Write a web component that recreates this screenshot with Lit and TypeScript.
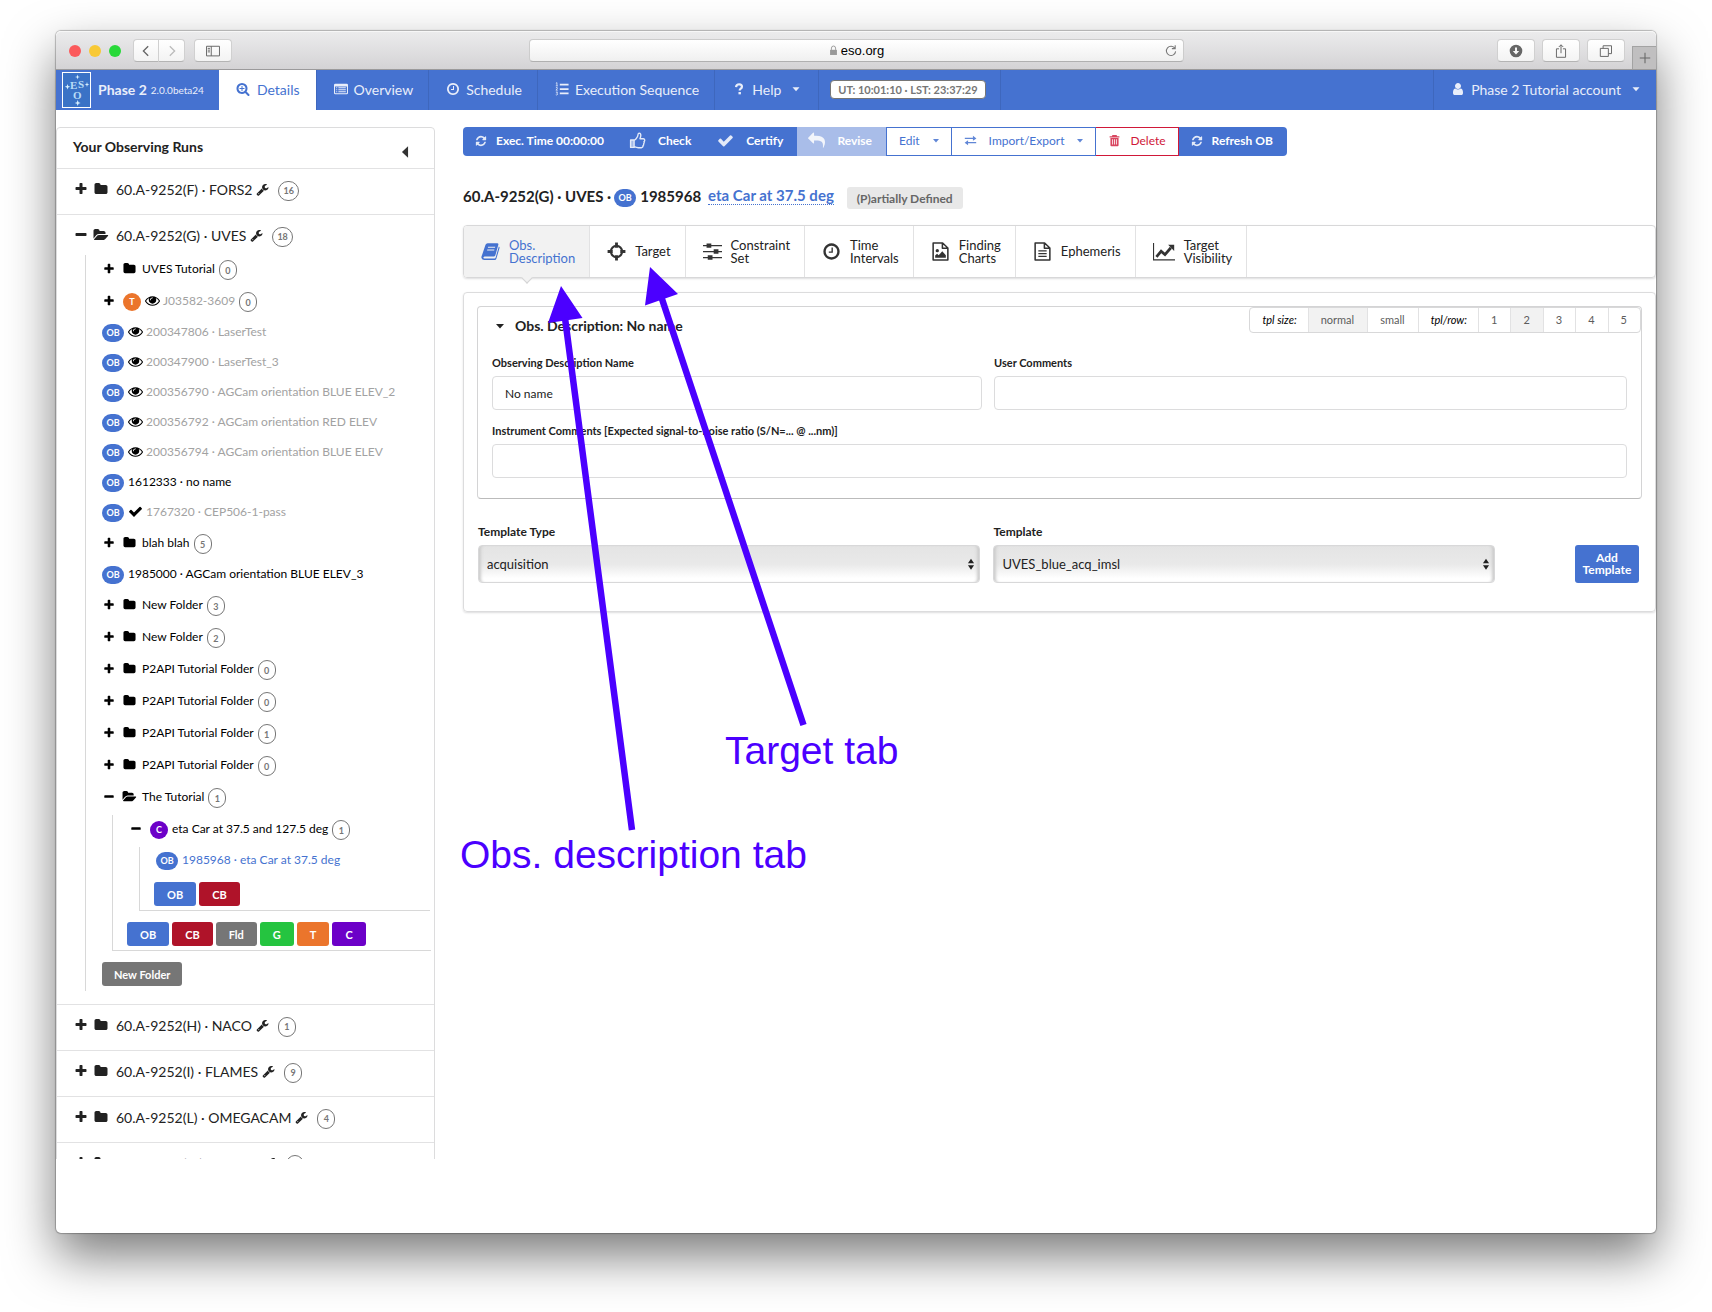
import { LitElement, html, svg, css, nothing, type TemplateResult } from "lit";
import { customElement, property } from "lit/decorators.js";
import { classMap } from "lit/directives/class-map.js";

interface Glyph {
  box: string;
  art: TemplateResult;
}

const solid = (d: string): Glyph => ({ box: "0 0 1792 1792", art: svg`<path d=${d} />` });
const drawn = (art: TemplateResult, box = "0 0 16 16"): Glyph => ({ box, art });

const GLYPHS: Record<string, Glyph> = {
  plus: solid("M1600 736v192q0 40-28 68t-68 28h-416v416q0 40-28 68t-68 28h-192q-40 0-68-28t-28-68v-416h-416q-40 0-68-28t-28-68v-192q0-40 28-68t68-28h416v-416q0-40 28-68t68-28h192q40 0 68 28t28 68v416h416q40 0 68 28t28 68z"),
  minus: solid("M1600 736v192q0 40-28 68t-68 28h-1216q-40 0-68-28t-28-68v-192q0-40 28-68t68-28h1216q40 0 68 28t28 68z"),
  folder: solid("M1728 608v704q0 92-66 158t-158 66h-1216q-92 0-158-66t-66-158v-960q0-92 66-158t158-66h320q92 0 158 66t66 158v32h672q92 0 158 66t66 158z"),
  open: solid("M1815 952q0 31-31 66l-336 396q-43 51-120.5 86.5t-143.5 35.5h-1088q-34 0-60.5-13t-26.5-43q0-31 31-66l336-396q43-51 120.5-86.5t143.5-35.5h1088q34 0 60.5 13t26.5 43zm-343-344v160h-832q-94 0-197 47.5t-164 119.5l-337 396-5 6q0-4-.5-12.5t-.5-12.5v-960q0-92 66-158t158-66h320q92 0 158 66t66 158v32h544q92 0 158 66t66 158z"),
  wrench: solid("M448 1472q0-26-19-45t-45-19-45 19-19 45 19 45 45 19 45-19 19-45zm644-420l-682 682q-37 37-90 37-52 0-91-37l-106-108q-38-36-38-90 0-53 38-91l681-681q39 98 114.5 173.5t173.5 114.5zm634-435q0 39-23 106-47 134-164.5 217.5t-258.5 83.5q-185 0-316.5-131.5t-131.5-316.5 131.5-316.5 316.5-131.5q58 0 121.5 16.5t107.5 46.5q16 11 16 28t-16 28l-293 169v224l193 107q5-3 79-48.5t135.5-81 70.5-35.5q15 0 23.5 10t8.5 25z"),
  eye: solid("M1664 960q-152-236-381-353 61 104 61 225 0 185-131.5 316.5t-316.5 131.5-316.5-131.5-131.5-316.5q0-121 61-225-229 117-381 353 133 205 333.5 326.5t434.5 121.5 434.5-121.5 333.5-326.5zm-720-384q0-20-14-34t-34-14q-125 0-214.5 89.5t-89.5 214.5q0 20 14 34t34 14 34-14 14-34q0-86 61-147t147-61q20 0 34-14t14-34zm848 384q0 34-20 69-140 230-376.5 368.5t-499.5 138.5-499.5-139-376.5-368q-20-35-20-69t20-69q140-229 376.5-368t499.5-139 499.5 139 376.5 368q20 35 20 69z"),
  check: solid("M1671 566q0 40-28 68l-724 724-136 136q-28 28-68 28t-68-28l-136-136-362-362q-28-28-28-68t28-68l136-136q28-28 68-28t68 28l294 295 656-657q28-28 68-28t68 28l136 136q28 28 28 68z"),
  clock: solid("M1024 544v448q0 14-9 23t-23 9h-320q-14 0-23-9t-9-23v-64q0-14 9-23t23-9h224v-352q0-14 9-23t23-9h64q14 0 23 9t9 23zm416 352q0-148-73-273t-198-198-273-73-273 73-198 198-73 273 73 273 198 198 273 73 273-73 198-198 73-273zm224 0q0 209-103 385.5t-279.5 279.5-385.5 103-385.5-103-279.5-279.5-103-385.5 103-385.5 279.5-279.5 385.5-103 385.5 103 279.5 279.5 103 385.5z"),
  refresh: solid("M1639 1056q0 5-1 7-64 268-268 434.5t-478 166.5q-146 0-282.5-55t-243.5-157l-129 129q-19 19-45 19t-45-19-19-45v-448q0-26 19-45t45-19h448q26 0 45 19t19 45-19 45l-137 137q71 66 161 102t187 36q134 0 250-65t186-179q11-17 53-117 8-23 30-23h192q13 0 22.5 9.5t9.5 22.5zm25-800v448q0 26-19 45t-45 19h-448q-26 0-45-19t-19-45 19-45l138-138q-148-137-349-137-134 0-250 65t-186 179q-11 17-53 117-8 23-30 23h-199q-13 0-22.5-9.5t-9.5-22.5v-7q65-268 270-434.5t480-166.5q146 0 284 55.5t245 156.5l130-129q19-19 45-19t45 19 19 45z"),
  reply: solid("M1792 1120q0 166-127 451-3 7-10.5 24t-13.5 30-13 22q-12 17-28 17-15 0-23.5-10t-8.5-25q0-9 2.5-26.5t2.5-23.5q5-68 5-123 0-101-17.5-181t-48.5-138.5-80-101-105.5-69.5-133-42.5-154-21.5-175.5-6h-224v256q0 26-19 45t-45 19-45-19l-512-512q-19-19-19-45t19-45l512-512q19-19 45-19t45 19 19 45v256h224q713 0 875 403 53 134 53 333z"),
  user: solid("M1536 1399q0 109-62.5 187t-150.5 78h-854q-88 0-150.5-78t-62.5-187q0-85 8.5-160.5t31.5-152 58.5-131 94-89 134.5-34.5q131 128 313 128t313-128q76 0 134.5 34.5t94 89 58.5 131 31.5 152 8.5 160.5zm-256-887q0 159-112.5 271.5t-271.5 112.5-271.5-112.5-112.5-271.5 112.5-271.5 271.5-112.5 271.5 112.5 112.5 271.5z"),
  zoom: solid("M1088 800v64q0 13-9.5 22.5t-22.5 9.5h-224v224q0 13-9.5 22.5t-22.5 9.5h-64q-13 0-22.5-9.5t-9.5-22.5v-224h-224q-13 0-22.5-9.5t-9.5-22.5v-64q0-13 9.5-22.5t22.5-9.5h224v-224q0-13 9.5-22.5t22.5-9.5h64q13 0 22.5 9.5t9.5 22.5v224h224q13 0 22.5 9.5t9.5 22.5zm128 32q0-185-131.5-316.5t-316.5-131.5-316.5 131.5-131.5 316.5 131.5 316.5 316.5 131.5 316.5-131.5 131.5-316.5zm512 832q0 53-37.5 90.5t-90.5 37.5q-54 0-90-38l-343-342q-179 124-399 124-143 0-273.5-55.5t-225-150-150-225-55.5-273.5 55.5-273.5 150-225 225-150 273.5-55.5 273.5 55.5 225 150 150 225 55.5 273.5q0 220-124 399l343 343q37 37 37 90z"),
  caret: drawn(svg`<path d="M4 6h8l-4 4.500z" />`),
  back: drawn(svg`<path d="M11.500 1.500v13L4.500 8z" />`),
  listAlt: drawn(svg`<path fill-rule="evenodd" d="M1.500 2h13Q16 2 16 3.500v9q0 1.500-1.500 1.500h-13Q0 14 0 12.500v-9Q0 2 1.500 2zM1.200 5v7.300q0 .5.5.5h12.600q.5 0 .5-.5V5z" /><path d="M2.500 6h1.200v1.200H2.500zM5 6h8.500v1.200H5zM2.500 8.300h1.200v1.200H2.500zM5 8.300h8.500v1.200H5zM2.500 10.600h1.200v1.200H2.500zM5 10.600h8.500v1.200H5z" />`),
  listOl: drawn(svg`<path d="M5.500 2h10v2h-10zM5.500 7h10v2h-10zM5.500 12h10v2h-10z" /><path d="M1 1.500l1.200-.8v3.500M.9 4.400h2.400M1 6.700q1.800-1.200 1.900.1Q2.900 7.600 1 9.300h2.200M1 11.500h1.900l-1 1.300q1.400.2 1 1.500-.8 1-2 .2" fill="none" stroke="currentColor" stroke-width=".9" />`),
  question: drawn(svg`<path d="M4.600 5.800Q5 2.600 8.200 2.600q3.200.2 3.200 2.800 0 1.500-1.600 2.400-1 .7-1 1.900" fill="none" stroke="currentColor" stroke-width="2.500" /><path d="M7.400 11.400h2.800v2.700H7.400z" />`),
  thumb: drawn(svg`<path d="M1.500 7.500h3.300v7H1.500zM4.800 8q2-1.200 2.800-3 .8-1 .9-2.600.1-1.300 1.100-1.300 1.700.2 1.500 2.300-.1 1.300-.8 2.900h3.200q1.400.2 1.300 1.400 0 .9-.7 1.400.6 1.100-.3 2 .2 1.100-.6 1.700.1 1.800-1.700 2H8.800q-1.500-.1-4-1" fill="none" stroke="currentColor" stroke-width="1.300" stroke-linejoin="round" /><path d="M1.500 7.500h3.300v7H1.500z" opacity=".6" />`),
  exchange: drawn(svg`<path d="M1 4.500h10V2.300L15.300 5.400 11 8.400V6.300H1zM15 9.700H5V7.800L.8 10.700 5 13.700v-2.200h10z" />`),
  trash: drawn(svg`<path fill-rule="evenodd" d="M5.500 1.200h5l.8 1.600H14V4.200H2V2.800h2.700zM3 5h10v8.700q0 1.300-1.200 1.300H4.200Q3 15 3 13.700zM5.200 6.500V13h1V6.500zM7.500 6.500V13h1V6.500zM9.800 6.500V13h1V6.500z" />`),
  book: drawn(svg`<path fill-rule="evenodd" d="M5.600 1h8.100q1.200.1.900 1.300l-2.500 8.900q-.4 1-1.400 1H3q-1 .2-1 .9 0 .7.900.8h8.600q.6 0 .8-.7l2.700-9.400q.8.4.6 1.200l-2.600 8.900q-.4 1.300-1.500 1.300H2.800Q.9 15 .4 13.400q-.2-.6.100-1.300L3.800 2.300Q4.300 1 5.600 1zM6 4l-.2.900h6L12 4zM5.300 6.300l-.2.900h6l.2-.9z" />`),
  crosshair: drawn(svg`<circle cx="8" cy="8" r="4.700" fill="none" stroke="currentColor" stroke-width="1.800" /><path d="M6.800.5h2.400v4.300H6.800zM6.800 11.200h2.400v4.300H6.800zM.5 6.800h4.300v2.400H.5zM11.200 6.800h4.300v2.400h-4.300z" />`),
  sliders: drawn(svg`<path d="M0 2.600h16v1H0zM0 7.600h16v1H0zM0 12.600h16v1H0zM3 1.200h4v3.700H3zM9 6.200h4v3.700H9zM4 11.200h4v3.700H4z" />`),
  image: drawn(svg`<path d="M1.800.8h8l4.400 4.200v10.200H1.800zM9.600 1v4.300H14" fill="none" stroke="currentColor" stroke-width="1.300" stroke-linejoin="round" /><circle cx="5.300" cy="7.300" r="1.400" /><path d="M3.500 13.200v-1.900l1.600-1.400 1.400 1.200 3-3.300 3 3.300v2.100z" />`),
  text: drawn(svg`<path d="M1.800.8h8l4.400 4.200v10.200H1.800zM9.600 1v4.300H14" fill="none" stroke="currentColor" stroke-width="1.300" stroke-linejoin="round" /><path d="M4.500 7h7v1h-7zM4.500 9.300h7v1h-7zM4.500 11.600h7v1h-7z" />`),
  chart: drawn(svg`<path d="M0 1.500h.8V13.300h15.200v.9H0z" /><path d="M2.500 11.500l3.400-4 2.800 2.400L13 4.900" fill="none" stroke="currentColor" stroke-width="2" /><path d="M11 2.700h4.400v4.500z" />`),
  chevronLeft: drawn(svg`<path d="M10.500 2.500L5 8l5.500 5.500" fill="none" stroke="currentColor" stroke-width="1.500" />`),
  chevronRight: drawn(svg`<path d="M5.500 2.500L11 8l-5.500 5.500" fill="none" stroke="currentColor" stroke-width="1.500" />`),
  panel: drawn(svg`<path d="M.6 2.600h14.800v11H.6zM6 2.600v11M2 5h2.500M2 7h2.500M2 9h2.500" fill="none" stroke="currentColor" stroke-width="1.100" />`),
  lock: drawn(svg`<path d="M3 7h10v7.500H3z" /><path d="M5 7V4.500q0-3 3-3t3 3V7" fill="none" stroke="currentColor" stroke-width="1.400" />`),
  reload: drawn(svg`<path d="M12.500 5A5.300 5.300 0 1 0 13.300 8.500M12.800 1.500V5.300H9" fill="none" stroke="currentColor" stroke-width="1.200" />`),
  download: drawn(svg`<path fill-rule="evenodd" d="M8 .8a7.200 7.200 0 1 1 0 14.400A7.200 7.200 0 0 1 8 .8zM6.900 4v4H4.300L8 12l3.700-4H9.100V4z" />`),
  share: drawn(svg`<path d="M5.800 5.500H2.800v9.700h10.400V5.500h-3M8 10.500V1M5.500 3.400L8 .9l2.500 2.500" fill="none" stroke="currentColor" stroke-width="1.100" />`),
  windows: drawn(svg`<path d="M1.500 5h9.200v9.200H1.500zM4.700 5V2H14.300v9h-3.500" fill="none" stroke="currentColor" stroke-width="1.100" />`),
  cross: drawn(svg`<path d="M8 2v12M2 8h12" fill="none" stroke="currentColor" stroke-width="1.200" />`),
  updown: drawn(svg`<path d="M4.500 7L8 2l3.500 5zM4.500 9.500h7L8 14.500z" />`),
};

@customElement("ui-icon")
export class UiIcon extends LitElement {
  @property() name = "plus";

  static styles = css`
    :host { display: inline-block; flex: none; width: 14px; height: 14px; }
    svg { display: block; width: 100%; height: 100%; overflow: visible; fill: currentColor; }
  `;

  render() {
    const glyph = GLYPHS[this.name];
    return html`<svg viewBox=${glyph.box} aria-hidden="true">${glyph.art}</svg>`;
  }
}

interface TreeNode {
  label: string;
  kind: "folder" | "ob" | "t" | "c";
  mark?: "eye" | "check";
  count?: number;
  current?: boolean;
  children?: TreeNode[];
  actions?: string[];
}

interface Run {
  label: string;
  count: number;
  children?: TreeNode[];
}

const folder = (label: string, count: number): TreeNode => ({ label, kind: "folder", count });
const block = (label: string, mark?: "eye" | "check"): TreeNode => ({ label, kind: "ob", mark });

const RUNS: Run[] = [
  { label: "60.A-9252(F) · FORS2", count: 16 },
  {
    label: "60.A-9252(G) · UVES",
    count: 18,
    children: [
      folder("UVES Tutorial", 0),
      { label: "J03582-3609", kind: "t", mark: "eye", count: 0 },
      block("200347806 · LaserTest", "eye"),
      block("200347900 · LaserTest_3", "eye"),
      block("200356790 · AGCam orientation BLUE ELEV_2", "eye"),
      block("200356792 · AGCam orientation RED ELEV", "eye"),
      block("200356794 · AGCam orientation BLUE ELEV", "eye"),
      block("1612333 · no name"),
      block("1767320 · CEP506-1-pass", "check"),
      folder("blah blah", 5),
      block("1985000 · AGCam orientation BLUE ELEV_3"),
      folder("New Folder", 3),
      folder("New Folder", 2),
      folder("P2API Tutorial Folder", 0),
      folder("P2API Tutorial Folder", 0),
      folder("P2API Tutorial Folder", 1),
      folder("P2API Tutorial Folder", 0),
      {
        label: "The Tutorial",
        kind: "folder",
        count: 1,
        actions: ["OB", "CB", "Fld", "G", "T", "C"],
        children: [
          {
            label: "eta Car at 37.5 and 127.5 deg",
            kind: "c",
            count: 1,
            actions: ["OB", "CB"],
            children: [{ label: "1985968 · eta Car at 37.5 deg", kind: "ob", current: true }],
          },
        ],
      },
    ],
  },
  { label: "60.A-9252(H) · NACO", count: 1 },
  { label: "60.A-9252(I) · FLAMES", count: 9 },
  { label: "60.A-9252(L) · OMEGACAM", count: 4 },
  { label: "60.A-9252(M) · Tutorial", count: 3 },
];

@customElement("run-list")
export class RunList extends LitElement {
  static styles = css`
    :host { display: block; min-width: 0; overflow: hidden; }
    .panel { border: 1px solid #dcdcdd; border-radius: 4px; color: #222; }
    .head { display: flex; align-items: center; justify-content: space-between; box-sizing: border-box; height: 41px; padding: 0 22px 3px 16px; border-bottom: 1px solid #e2e2e3; font-size: 14px; font-weight: 700; }
    .fold { display: flex; margin-top: 10px; padding: 0; border: 0; background: none; color: #333; }
    .run { border-bottom: 1px solid #e2e2e3; }
    .run-title { display: flex; align-items: center; box-sizing: border-box; height: 45px; padding: 0 0 5px 17px; font-size: 14px; white-space: nowrap; }
    button { font: inherit; cursor: pointer; }
    .toggle { display: flex; width: 14px; justify-content: center; padding: 0; border: 0; background: none; color: inherit; }
    .toggle ui-icon { width: 12px; height: 12px; }
    .big { width: 14px; height: 14px; margin: 0 8px 0 6px; }
    .run-title .toggle ui-icon { width: 14px; height: 14px; }
    .tool { width: 13px; height: 13px; margin: 0 9px 0 4px; }
    .count { display: flex; align-items: center; justify-content: center; box-sizing: border-box; min-width: 18px; height: 20px; margin-top: 3px; padding: 0 4px; border: 1px solid #767676; border-radius: 10px; color: #767676; font-size: 9px; font-weight: 700; }
    .tree { margin: -5px 3px 13px 28px; padding-left: 16px; border-left: 1px solid #d8d8d8; color: #000; font-size: 12px; }
    .branch { margin: 0 0 6px 10px; padding: 0 0 4px 16px; border-left: 1px solid #d8d8d8; border-bottom: 1px solid #d8d8d8; }
    .branch .branch { margin-right: 1px; }
    .row { display: flex; align-items: center; box-sizing: border-box; height: 32px; padding-bottom: 5px; white-space: nowrap; }
    .leaf { height: 30px; }
    .row .count { margin-left: 4px; }
    .row .kind-folder { width: 13px; height: 13px; margin: 0 6px 0 7px; }
    .badge { display: flex; align-items: center; justify-content: center; flex: none; width: 18px; height: 18px; margin: 2px 4px 0 7px; border-radius: 9px; color: #fff; font-size: 9px; font-weight: 700; }
    .ob { width: 22px; margin-left: 0; background: #4572d0; }
    .t { background: #eb752c; }
    .c { background: #6c00c8; }
    .mark { width: 15px; height: 15px; margin-right: 3px; }
    .locked { color: #a2a2a2; }
    .current { color: #4572d0; }
    a { color: inherit; text-decoration: none; }
    .actions { display: flex; gap: 3px; margin-left: -2px; padding-top: 5px; }
    .actions button { height: 24px; padding: 0 13px; border: 0; border-radius: 3px; color: #fff; font-size: 11px; font-weight: 700; }
    .a-OB { background: #4572d0; }
    .a-CB { background: #af1329; }
    .a-Fld, .actions .a-new { background: #767676; }
    .a-G { background: #25c440; }
    .a-T { background: #eb752c; }
    .a-C { background: #6c00c8; }
    .last { margin-left: 0; padding: 5px 0; }
    .last button { padding: 0 12px; }
  `;

  private row(node: TreeNode): TemplateResult {
    const leaf = node.kind === "ob";
    const name = leaf ? "OB" : node.kind.toUpperCase();
    return html`
      <div class=${classMap({ row: true, leaf })}>
        ${leaf ? nothing : html`<button class="toggle" aria-label="Toggle ${node.label}"><ui-icon name=${node.children ? "minus" : "plus"}></ui-icon></button>`}
        ${node.kind === "folder"
          ? html`<ui-icon class="kind-folder" name=${node.children ? "open" : "folder"}></ui-icon>`
          : html`<span class="badge ${node.kind}">${name}</span>`}
        ${node.mark ? html`<ui-icon class="mark" name=${node.mark}></ui-icon>` : nothing}
        <a href="#" class=${classMap({ locked: !!node.mark, current: !!node.current })}>${node.label}</a>
        ${node.count === undefined ? nothing : html`<span class="count">${node.count}</span>`}
      </div>
      ${node.children
        ? html`<div class="branch">
            ${node.children.map((child) => this.row(child))}
            <div class="actions">${(node.actions ?? []).map((a) => html`<button class="a-${a}">${a}</button>`)}</div>
          </div>`
        : nothing}
    `;
  }

  render() {
    return html`
      <div class="panel">
        <div class="head">
          <span>Your Observing Runs</span>
          <button class="fold" aria-label="Collapse list"><ui-icon name="back"></ui-icon></button>
        </div>
        ${RUNS.map((run) => html`
          <section class="run">
            <div class="run-title">
              <button class="toggle" aria-label="Toggle ${run.label}"><ui-icon name=${run.children ? "minus" : "plus"}></ui-icon></button>
              <ui-icon class="big" name=${run.children ? "open" : "folder"}></ui-icon>
              <a href="#">${run.label}</a>
              <ui-icon class="tool" name="wrench"></ui-icon>
              <span class="count">${run.count}</span>
            </div>
            ${run.children
              ? html`<div class="tree">
                  ${run.children.map((node) => this.row(node))}
                  <div class="actions last"><button class="a-new">New Folder</button></div>
                </div>`
              : nothing}
          </section>
        `)}
      </div>
    `;
  }
}

const TABS: [string, string][] = [
  ["book", "Obs. Description"],
  ["crosshair", "Target"],
  ["sliders", "Constraint Set"],
  ["clock", "Time Intervals"],
  ["image", "Finding Charts"],
  ["text", "Ephemeris"],
  ["chart", "Target Visibility"],
];

@customElement("block-editor")
export class BlockEditor extends LitElement {
  static styles = css`
    :host { display: block; min-width: 0; color: #222; }
    button, input, select { font: inherit; color: inherit; }
    button { cursor: pointer; }
    .bar { display: flex; height: 29px; font-size: 12px; }
    .bar button { display: flex; align-items: center; gap: 9px; padding: 0 12px 2px; border: 0; background: #4572d0; color: #fff; font-weight: 700; white-space: nowrap; }
    .bar ui-icon { width: 12px; height: 12px; opacity: .85; }
    .bar button:first-child { border-radius: 4px 0 0 4px; padding-right: 13px; }
    .bar button:last-child { border-radius: 0 4px 4px 0; padding-right: 14px; }
    .bar .large { gap: 12px; padding-right: 14px; }
    .bar .large ui-icon { width: 17px; height: 17px; }
    .bar .off { background: #a9bde9; padding-left: 11px; }
    .bar .line { gap: 12px; border: 1px solid #4572d0; background: #fff; color: #4572d0; font-weight: 400; }
    .bar .line + .line { border-left: 0; }
    .bar .line ui-icon { width: 13px; height: 13px; }
    .bar .line .drop { width: 12px; margin-right: -3px; margin-left: -2px; }
    .bar .danger.danger { border-color: #d01839; color: #d01839; gap: 9px; }
    .bar .danger ui-icon { opacity: .8; }
    .title { display: flex; align-items: center; gap: 3px; margin-top: 28px; height: 24px; font-size: 15px; font-weight: 700; white-space: nowrap; }
    .title .badge { display: flex; align-items: center; justify-content: center; width: 22px; height: 18px; margin: 3px 1px 0 0; border-radius: 9px; background: #4572d0; color: #fff; font-size: 9px; }
    .title a { margin-left: 4px; border-bottom: 1px dotted #4572d0; color: #4572d0; text-decoration: none; line-height: 17px; }
    .state { display: flex; align-items: center; height: 22px; margin: 4px 0 0 10px; padding: 0 10px; border-radius: 3px; background: #e8e8e8; color: #666; font-size: 12px; }
    .tabs { display: flex; height: 51px; margin-top: 17px; border: 1px solid #d8d8d9; border-radius: 4px; box-shadow: 0 1px 2px rgba(34, 36, 38, .15); }
    .tabs button { position: relative; display: flex; align-items: center; gap: 9px; padding: 0 14px 0 17px; border: 0; border-right: 1px solid #e2e2e3; background: none; font-size: 13px; line-height: 13px; text-align: left; }
    .tabs span { width: min-content; }
    .tabs ui-icon { width: 19px; height: 19px; color: #333; }
    .tabs ui-icon[name="chart"] { width: 22px; height: 22px; }
    .tabs .on { border-radius: 3px 0 0 3px; background: #f2f2f2; color: #4572d0; }
    .tabs .on ui-icon { color: inherit; }
    .tabs .on::after { content: ""; position: absolute; left: 50%; bottom: -5px; width: 7px; height: 7px; margin-left: -4px; border: solid #d4d4d5; border-width: 0 1px 1px 0; background: #f2f2f2; transform: rotate(45deg); }
    .card { margin-top: 14px; padding: 13px 13px 28px; border: 1px solid #dcdcdd; border-radius: 4px; box-shadow: 0 1px 2px rgba(34, 36, 38, .15); }
    .desc { padding: 0 14px 20px; border: 1px solid #d4d4d5; border-bottom-color: #bbb; border-radius: 4px; }
    .desc-head { display: flex; justify-content: space-between; margin-right: -14px; }
    h2 { display: flex; align-items: center; gap: 7px; margin: 9px 0 0; font-size: 14px; line-height: 20px; }
    h2 button { display: flex; padding: 0; border: 0; background: none; }
    h2 ui-icon { width: 16px; height: 16px; }
    .sizes { display: flex; height: 26px; box-sizing: border-box; border: 1px solid #d8d8d9; border-radius: 4px; font-size: 11px; line-height: 24px; }
    .sizes em { padding: 0 11px 0 12px; color: #000; }
    .sizes button { padding: 0 13px 0 12px; border: 0; border-left: 1px solid #e2e2e3; background: none; color: #5c5c5c; }
    .sizes button + em { border-left: 1px solid #e2e2e3; }
    .sizes .on { background: #f2f2f2; }
    .fields { display: grid; grid-template-columns: 490fr 633fr; gap: 12px; margin-top: 18px; }
    .fields .wide { grid-column: 1 / -1; }
    .fields label { display: block; margin-bottom: 4px; font-size: 11px; line-height: 18px; font-weight: 700; }
    .fields input { width: 100%; height: 34px; box-sizing: border-box; padding: 0 12px; border: 1px solid #dcdcdd; border-radius: 4px; background: #fff; font-size: 12px; }
    .template { display: grid; grid-template-columns: 502fr 501fr 54fr 64px; gap: 0 13px; align-items: end; margin-top: 24px; padding: 0 3px 0 1px; }
    .template label { display: block; margin-bottom: 4px; font-size: 12px; line-height: 18px; font-weight: 700; }
    .select { position: relative; }
    .select select { display: block; width: 100%; height: 38px; padding: 0 8px; appearance: none; border: 1px solid #d8d8d9; border-radius: 4px; background: linear-gradient(#e4e4e4, #e9e9e9 50%, #fff 90%); box-shadow: inset 4px 0 3px -2px #ccc, inset -4px 0 3px -2px #ccc; font-size: 13px; }
    .select ui-icon { position: absolute; right: 2px; top: 12px; pointer-events: none; }
    .add { grid-column: 4; height: 38px; padding: 0; border: 0; border-radius: 3px; background: #4572d0; color: #fff; font-size: 12px; font-weight: 700; line-height: 12px; }
  `;

  render() {
    const pick = (label: string, on = false) => html`<button class=${classMap({ on })} aria-pressed=${on}>${label}</button>`;
    return html`
      <div class="bar">
        <button><ui-icon name="refresh"></ui-icon>Exec. Time 00:00:00</button>
        <button class="large"><ui-icon name="thumb"></ui-icon>Check</button>
        <button class="large"><ui-icon name="check"></ui-icon>Certify</button>
        <button class="large off"><ui-icon name="reply"></ui-icon>Revise</button>
        <button class="line">Edit<ui-icon class="drop" name="caret"></ui-icon></button>
        <button class="line"><ui-icon name="exchange"></ui-icon>Import/Export<ui-icon class="drop" name="caret"></ui-icon></button>
        <button class="line danger"><ui-icon name="trash"></ui-icon>Delete</button>
        <button><ui-icon name="refresh"></ui-icon>Refresh OB</button>
      </div>
      <div class="title">
        <span>60.A-9252(G) · UVES ·</span><span class="badge">OB</span><span>1985968</span>
        <a href="#">eta Car at 37.5 deg</a>
        <span class="state">(P)artially Defined</span>
      </div>
      <div class="tabs">
        ${TABS.map(([name, label], i) => html`
          <button class=${classMap({ on: i === 0 })}><ui-icon name=${name}></ui-icon><span>${label}</span></button>
        `)}
      </div>
      <div class="card">
        <div class="desc">
          <div class="desc-head">
            <h2><button aria-label="Collapse section"><ui-icon name="caret"></ui-icon></button>Obs. Description: No name</h2>
            <div class="sizes">
              <em>tpl size:</em>${pick("normal", true)}${pick("small")}<em>tpl/row:</em>${["1", "2", "3", "4", "5"].map((n) => pick(n, n === "2"))}
            </div>
          </div>
          <div class="fields">
            <div><label for="name">Observing Description Name</label><input id="name" type="text" .value=${"No name"} /></div>
            <div><label for="comments">User Comments</label><input id="comments" type="text" /></div>
            <div class="wide"><label for="instrument">Instrument Comments [Expected signal-to-noise ratio (S/N=... @ ...nm)]</label><input id="instrument" type="text" /></div>
          </div>
        </div>
        <div class="template">
          <div>
            <label for="type">Template Type</label>
            <div class="select"><select id="type"><option>acquisition</option></select><ui-icon name="updown"></ui-icon></div>
          </div>
          <div>
            <label for="tpl">Template</label>
            <div class="select"><select id="tpl"><option>UVES_blue_acq_imsl</option></select><ui-icon name="updown"></ui-icon></div>
          </div>
          <button class="add">Add<br />Template</button>
        </div>
      </div>
    `;
  }
}

@customElement("app-root")
export class AppRoot extends LitElement {
  static styles = css`
    :host { position: relative; display: flex; box-sizing: border-box; height: 100vh; padding: 31px 56px 79px; overflow: hidden; background: #fff; font-family: Lato, "Liberation Sans", sans-serif; }
    button { font: inherit; cursor: pointer; }
    .window { display: flex; flex: 1; flex-direction: column; min-width: 0; border-radius: 5px; background: #fff; box-shadow: 0 0 1px 1px rgba(0, 0, 0, .25), 0 23px 50px rgba(0, 0, 0, .52); }
    .chrome { display: grid; grid-template-columns: 1fr 655px 1fr; align-items: center; box-sizing: border-box; height: 39px; padding-top: 1px; border-bottom: 1px solid #9b9a9b; border-radius: 5px 5px 0 0; background: linear-gradient(#ececed, #d4d3d5); box-shadow: inset 0 1px #f7f7f7; }
    .left, .right { display: flex; align-items: center; }
    .left { padding-left: 13px; }
    .right { justify-content: flex-end; gap: 7px; height: 100%; }
    .dot { width: 12px; height: 12px; margin-right: 8px; border-radius: 50%; }
    .red { background: #fb5a5c; } .amber { background: #f8c935; } .green { background: #28d939; }
    .key { display: flex; align-items: center; justify-content: center; width: 38px; height: 23px; padding: 0; border: 1px solid #d0d0d0; border-bottom-color: #b4b4b4; border-radius: 4px; background: linear-gradient(#fff, #f3f3f3); color: #666; }
    .left .key { width: 26px; }
    .left .back { margin-left: 4px; border-radius: 4px 0 0 4px; }
    .left .next { border-radius: 0 4px 4px 0; border-left: 0; color: #bbb; }
    .left .side { width: 38px; margin-left: 9px; }
    .address { display: grid; grid-template-columns: 1fr auto 1fr; align-items: center; height: 23px; box-sizing: border-box; padding: 0 5px; border: 1px solid #ccc; border-bottom-color: #b0b0b0; border-radius: 4px; background: linear-gradient(#fff, #f0f0f0); color: #000; font-family: "Liberation Sans", sans-serif; font-size: 13px; }
    .site { grid-column: 2; display: flex; align-items: center; gap: 2px; }
    .site ui-icon { width: 11px; height: 11px; color: #999; }
    .reload { justify-self: end; display: flex; padding: 0; border: 0; background: none; color: #777; }
    .plus { align-self: flex-end; display: flex; align-items: center; justify-content: center; width: 24px; height: 23px; padding: 0; border: 1px solid #a3a3a3; border-width: 1px 0 0 1px; background: #c0bfc0; color: #666; }
    .nav { display: flex; height: 40px; background: #4572d0; color: #e9eefa; font-size: 14px; }
    .nav > * { box-sizing: border-box; display: flex; align-items: center; border-right: 1px solid #3e67bd; padding-bottom: 2px; white-space: nowrap; }
    .nav a { gap: 6px; padding: 0 15px 2px 17px; color: inherit; text-decoration: none; }
    .nav .brand { padding: 0 15px 1px 6px; border-right: 0; }
    .brand b { margin: 0 4px 0 7px; } .brand small { margin-top: 1px; font-size: 10px; }
    .logo { width: 29px; height: 36px; }
    .nav .here { gap: 7px; padding-right: 16px; background: #fff; color: #4572d0; }
    .nav .drop { width: 14px; height: 14px; margin-left: 2px; }
    .nav .clock { padding: 0 14px 2px 11px; }
    .clock span { padding: 0 7px; border: 1px solid #767676; border-radius: 4px; background: #fff; color: #767676; font-size: 11px; line-height: 17px; font-weight: 700; }
    .nav .account { margin-left: auto; border-right: 0; border-left: 1px solid #3e67bd; padding-right: 13px; }
    .body { display: grid; grid-template-columns: 379px minmax(0, 1fr); grid-template-rows: minmax(0, 1fr); gap: 28px; flex: 1; min-height: 0; padding: 17px 0 74px; }
    .arrows { position: absolute; left: 0; top: 0; width: 1000px; height: 900px; pointer-events: none; fill: #4b00ff; stroke: #4b00ff; }
    .note { position: absolute; color: #4b00ff; font-family: "Liberation Sans", sans-serif; font-size: 39px; line-height: 46px; white-space: nowrap; }
    .note-target { left: 725px; top: 728px; }
    .note-desc { left: 460px; top: 832px; }
  `;

  render() {
    return html`
      <div class="window">
        <div class="chrome">
          <div class="left">
            <span class="dot red"></span><span class="dot amber"></span><span class="dot green"></span>
            <button class="key back" aria-label="Back"><ui-icon name="chevronLeft"></ui-icon></button>
            <button class="key next" aria-label="Forward"><ui-icon name="chevronRight"></ui-icon></button>
            <button class="key side" aria-label="Sidebar"><ui-icon name="panel"></ui-icon></button>
          </div>
          <div class="address">
            <span class="site"><ui-icon name="lock"></ui-icon>eso.org</span>
            <button class="reload" aria-label="Reload"><ui-icon name="reload"></ui-icon></button>
          </div>
          <div class="right">
            <button class="key" aria-label="Downloads"><ui-icon name="download"></ui-icon></button>
            <button class="key" aria-label="Share"><ui-icon name="share"></ui-icon></button>
            <button class="key" aria-label="Tabs"><ui-icon name="windows"></ui-icon></button>
            <button class="plus" aria-label="New tab"><ui-icon name="cross"></ui-icon></button>
          </div>
        </div>
        <nav class="nav">
          <div class="brand">
            <svg class="logo" viewBox="0 0 29 36" aria-hidden="true">
              <rect x=".5" y=".5" width="28" height="35" fill="#3a72c6" stroke="#fff" />
              <g fill="#b9ddf6" font-family="Liberation Serif, serif" font-weight="700" font-size="11">
                <text x="8" y="17">E</text><text x="16" y="16">S</text><text x="11" y="27">O</text>
              </g>
              <path fill="#d8f0ff" d="M15.500 2.500l.6 1.900 1.900.6-1.900.6-.6 1.900-.6-1.900-1.900-.6 1.900-.6zM5.500 12l.7 2 2 .7-2 .7-.7 2-.7-2-2-.7 2-.7zM25 10l.6 1.900 1.900.6-1.900.6-.6 1.900-.6-1.900-1.900-.6 1.900-.6zM15.700 28l.8 2.200 2.200.8-2.200.8-.8 2.200-.8-2.200-2.200-.8 2.200-.8z" />
            </svg>
            <b>Phase 2</b><small>2.0.0beta24</small>
          </div>
          <a href="#" class="here"><ui-icon name="zoom"></ui-icon>Details</a>
          <a href="#"><ui-icon name="listAlt"></ui-icon>Overview</a>
          <a href="#"><ui-icon name="clock"></ui-icon>Schedule</a>
          <a href="#"><ui-icon name="listOl"></ui-icon>Execution Sequence</a>
          <a href="#"><ui-icon name="question"></ui-icon>Help<ui-icon class="drop" name="caret"></ui-icon></a>
          <div class="clock"><span>UT: 10:01:10 · LST: 23:37:29</span></div>
          <a href="#" class="account"><ui-icon name="user"></ui-icon>Phase 2 Tutorial account<ui-icon class="drop" name="caret"></ui-icon></a>
        </nav>
        <div class="body">
          <run-list></run-list>
          <block-editor></block-editor>
        </div>
      </div>
      <svg class="arrows" viewBox="0 0 1000 900" aria-hidden="true">
        <path stroke="none" d="M561 286l21.500 32-34.500 5zM650 267l28 27-33 11.500z" />
        <path fill="none" stroke-width="6.500" d="M565 318L632 830M661 296L803.500 725" />
      </svg>
      <span class="note note-target">Target tab</span>
      <span class="note note-desc">Obs. description tab</span>
    `;
  }
}
